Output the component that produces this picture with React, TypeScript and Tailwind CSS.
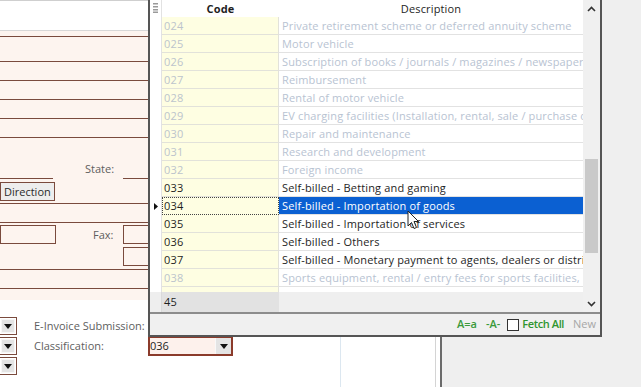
import React from 'react';

const rows = [
  { code: '024', desc: 'Private retirement scheme or deferred annuity scheme', on: false },
  { code: '025', desc: 'Motor vehicle', on: false },
  { code: '026', desc: 'Subscription of books / journals / magazines / newspapers', on: false },
  { code: '027', desc: 'Reimbursement', on: false },
  { code: '028', desc: 'Rental of motor vehicle', on: false },
  { code: '029', desc: 'EV charging facilities (Installation, rental, sale / purchase or subscription fees)', on: false },
  { code: '030', desc: 'Repair and maintenance', on: false },
  { code: '031', desc: 'Research and development', on: false },
  { code: '032', desc: 'Foreign income', on: false },
  { code: '033', desc: 'Self-billed - Betting and gaming', on: true },
  { code: '034', desc: 'Self-billed - Importation of goods', on: true, current: true },
  { code: '035', desc: 'Self-billed - Importation of services', on: true },
  { code: '036', desc: 'Self-billed - Others', on: true },
  { code: '037', desc: 'Self-billed - Monetary payment to agents, dealers or distributors', on: true },
  { code: '038', desc: 'Sports equipment, rental / entry fees for sports facilities, registration in sports competition', on: false },
];

function DownTriangle() {
  return (
    <svg width="8" height="5" viewBox="0 0 8 5">
      <path d="M0 0 L8 0 L4 5 Z" fill="#111" />
    </svg>
  );
}

function Chevron({ up }: { up?: boolean }) {
  return (
    <svg width="9" height="6" viewBox="0 0 9 6">
      <polyline
        points={up ? '1,5 4.5,1.5 8,5' : '1,1 4.5,4.5 8,1'}
        fill="none"
        stroke="#333"
        strokeWidth="1.6"
      />
    </svg>
  );
}

function ComboButton() {
  return (
    <div className="w-[17px] h-[18px] border border-l-0 border-[#7a4a3d] bg-white flex">
      <div className="flex-1 m-[1px] bg-[#e4e4e4] border border-[#f6f6f6] flex items-center justify-center">
        <DownTriangle />
      </div>
    </div>
  );
}

export default function App() {
  return (
    <div className="relative w-[641px] h-[387px] overflow-hidden bg-white font-['Open_Sans',sans-serif] text-[11px]">

      {/* Underlying form */}
      <div className="flex h-full">
        <div className="w-[340px] flex flex-col">
          <div className="h-[31px] bg-white border-t border-t-[#cfcfcf] border-b border-b-[#d8d8d8]" />

          {/* Peach field area */}
          <div className="h-[269px] bg-[#fdf4ef] flex flex-col text-[#5e5e5e]">
            <div className="h-[5px]" />
            <div className="h-[25px] border-t border-[#7a4a3d]" />
            <div className="h-[19px] border-t border-[#7a4a3d]" />
            <div className="h-[19px] border-t border-[#7a4a3d]" />
            <div className="h-[19px] border-t border-[#7a4a3d]" />
            <div className="h-[19px] border-t border-[#7a4a3d]" />
            <div className="h-[42px] border-t border-[#7a4a3d] flex items-end">
              <div className="w-[53px] h-[10px] border-b border-[#7a4a3d]" />
              <span className="ml-[32px] w-[38px] mb-[3px] leading-[15px]">State:</span>
              <div className="flex-1 h-[10px] border-b border-[#7a4a3d]" />
            </div>
            <div className="h-[24px] pt-[3px]">
              <div className="w-[55px] h-[19px] border border-[#7a4a3d] bg-[#ededed] pl-[3px] leading-[17px] text-[#2a2a2a]">
                Direction
              </div>
            </div>
            <div className="h-[19px] border-t border-[#7a4a3d]" />
            <div className="h-[25px] border-t border-[#7a4a3d] pt-[2px] flex items-start">
              <div className="w-[56px] h-[19px] border border-[#7a4a3d]" />
              <span className="ml-[37px] w-[30px] leading-[19px]">Fax:</span>
              <div className="flex-1 h-[19px] border border-[#7a4a3d]" />
            </div>
            <div className="h-[22px] flex items-start">
              <div className="w-[123px]" />
              <div className="flex-1 h-[19px] border border-[#7a4a3d]" />
            </div>
            <div className="h-[19px] border-t border-[#7a4a3d]" />
            <div className="h-[12px] border-t border-[#7a4a3d]" />
          </div>

          {/* Lower combo rows */}
          <div className="flex-1 bg-white pt-[16px] flex flex-col text-[#5e5e5e]">
            <div className="h-[20px] flex items-center">
              <ComboButton />
              <span className="ml-[17px] w-[114px] whitespace-nowrap">E-Invoice Submission:</span>
            </div>
            <div className="h-[20px] flex items-center">
              <ComboButton />
              <span className="ml-[17px] w-[114px] whitespace-nowrap">Classification:</span>
              <div className="w-[85px] h-[20px] border-2 border-[#8b3b2b] bg-[#fdf1ec] flex">
                <span className="flex-1 leading-[16px] text-[#1e1e1e]">036</span>
                <div className="w-[16px] bg-[#e4e4e4] border-l border-[#f8f8f8] flex items-center justify-center">
                  <DownTriangle />
                </div>
              </div>
            </div>
            <div className="h-[20px] flex items-center">
              <ComboButton />
            </div>
          </div>
        </div>
        <div className="w-[95px] border-l border-[#dce7f0] bg-white" />
        <div className="w-[5px] border-l border-[#d4d4d4] bg-white" />
        <div className="flex-1 border-l-2 border-[#6b6b6b] bg-[#efefef]" />
      </div>

      {/* Lookup popup */}
      <div className="absolute left-[148px] top-0 w-[454px] h-[337px] flex flex-col bg-white border-x-2 border-b-2 border-[#555]">
        <div className="h-[312px] flex">
          <div className="w-[433px] flex flex-col tracking-[0.15px]">
            {/* Header */}
            <div className="h-[17px] flex text-[#1e1e1e]">
              <div className="w-[12px] border-r border-[#e2e2e2] flex justify-center pt-[3px]">
                <svg width="5" height="10" viewBox="0 0 5 10">
                  <rect x="0" y="0" width="5" height="1.5" fill="#9a9a9a" />
                  <rect x="0" y="3" width="5" height="1.5" fill="#9a9a9a" />
                  <rect x="0" y="6" width="5" height="1.5" fill="#9a9a9a" />
                  <rect x="0" y="8.5" width="5" height="1.5" fill="#9a9a9a" />
                </svg>
              </div>
              <div className="w-[117px] text-center font-bold leading-[17px]">Code</div>
              <div className="flex-1 text-center leading-[17px]">Description</div>
            </div>

            {/* Rows */}
            {rows.map((r) => (
              <div key={r.code} className="h-[18px] flex">
                <div className="w-[12px] border-r border-[#e2e2e2] flex items-center justify-center">
                  {r.current && (
                    <svg width="4" height="7" viewBox="0 0 4 7">
                      <path d="M0 0 L4 3.5 L0 7 Z" fill="#111" />
                    </svg>
                  )}
                </div>
                <div
                  className={
                    r.current
                      ? 'w-[117px] bg-[#fefee2] border border-dotted border-[#444] pl-[1px] leading-[16px]'
                      : 'w-[117px] bg-[#fefee2] border-b border-r border-[#e2e2da] pl-[2px] leading-[17px]'
                  }
                >
                  <span className={r.on ? 'text-[#1e1e1e]' : 'text-[#bcc4cc]'}>{r.code}</span>
                </div>
                <div
                  className={
                    r.current
                      ? 'flex-1 bg-[#0b60d2] text-white border-b border-[#e2e2e2] pl-[3px] leading-[17px] whitespace-nowrap overflow-hidden'
                      : 'flex-1 border-b border-[#e2e2e2] pl-[3px] leading-[17px] whitespace-nowrap overflow-hidden ' +
                        (r.on ? 'text-[#1e1e1e]' : 'text-[#b8c3d2]')
                  }
                >
                  {r.desc}
                </div>
              </div>
            ))}

            <div className="flex-1 flex">
              <div className="w-[12px] border-r border-[#e2e2e2]" />
              <div className="w-[117px] bg-[#fefee2] border-r border-[#e2e2da]" />
              <div className="flex-1" />
            </div>

            {/* Count row */}
            <div className="h-[20px] flex">
              <div className="w-[12px] bg-[#eeeeee] border-r border-[#dadada]" />
              <div className="w-[117px] bg-[#e2e2e2] pl-[2px] leading-[20px] text-[#1e1e1e]">45</div>
              <div className="flex-1 bg-[#efefef]" />
            </div>
          </div>

          {/* Scrollbar */}
          <div className="w-[17px] bg-[#f0f0f0] flex flex-col">
            <div className="h-[17px] flex items-center justify-center">
              <Chevron up />
            </div>
            <div className="flex-1 pt-[142px] px-[2px]">
              <div className="h-[94px] bg-[#c9c9c9]" />
            </div>
            <div className="h-[17px] flex items-center justify-center">
              <Chevron />
            </div>
          </div>
        </div>

        <div className="h-[2px] bg-[#8c8c8c]" />

        {/* Footer */}
        <div className="flex-1 bg-[#f0f0f0] flex items-center justify-end pr-[4px] font-semibold">
          <span className="text-[#3a9a3a]">A=a</span>
          <span className="ml-[9px] text-[#3a9a3a]">-A-</span>
          <div className="ml-[7px] w-[12px] h-[12px] border border-[#333] bg-white" />
          <span className="ml-[3px] text-[#2f952f] tracking-[-0.4px]">Fetch All</span>
          <span className="ml-[9px] font-normal text-[#a6a6a6]">New</span>
        </div>
      </div>

      {/* Mouse pointer */}
      <svg className="absolute left-[407px] top-[210px]" width="13" height="20" viewBox="0 0 13 20">
        <path d="M1 1 L1 16 L4.5 12.5 L7 18.5 L9.5 17.5 L7 11.5 L11.5 11.5 Z" fill="#fff" stroke="#222" strokeWidth="1" />
      </svg>
    </div>
  );
}
